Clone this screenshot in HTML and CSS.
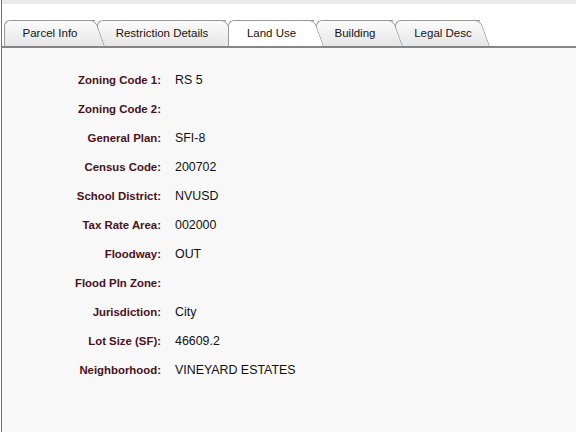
FILE: index.html
```html
<!DOCTYPE html>
<html>
<head>
<meta charset="utf-8">
<link rel="stylesheet" href="styles.css">
</head>
<body>
<div class="frame">
  <div class="topstrip"></div>
  <nav class="tabbar">
    <div class="tab t1">Parcel Info</div>
    <div class="tab t2">Restriction Details</div>
    <div class="tab t3 active">Land Use</div>
    <div class="tab t4">Building</div>
    <div class="tab t5">Legal Desc</div>
  </nav>
  <main class="panel">
    <div class="grid">
      <div class="label">Zoning Code 1:</div><div class="value">RS 5</div>
      <div class="label">Zoning Code 2:</div><div class="value"></div>
      <div class="label">General Plan:</div><div class="value">SFI-8</div>
      <div class="label">Census Code:</div><div class="value">200702</div>
      <div class="label">School District:</div><div class="value">NVUSD</div>
      <div class="label">Tax Rate Area:</div><div class="value">002000</div>
      <div class="label">Floodway:</div><div class="value">OUT</div>
      <div class="label">Flood Pln Zone:</div><div class="value"></div>
      <div class="label">Jurisdiction:</div><div class="value">City</div>
      <div class="label">Lot Size (SF):</div><div class="value">46609.2</div>
      <div class="label">Neighborhood:</div><div class="value">VINEYARD ESTATES</div>
    </div>
  </main>
</div>
</body>
</html>
```
FILE: styles.css
```css
html, body {
  margin: 0;
  padding: 0;
  height: 100%;
  background: #ffffff;
  font-family: "Liberation Sans", Arial, sans-serif;
}
body {
  padding-left: 1px;
  box-sizing: border-box;
  overflow: hidden;
}
.frame {
  height: 432px;
  border-left: 1px solid #727272;
  display: flex;
  flex-direction: column;
  background: #ffffff;
}
.topstrip {
  height: 4px;
  background: #ebebeb;
  flex: none;
}
.tabbar {
  display: flex;
  padding: 16px 0 0 2px;
  height: 26px;
  flex: none;
}
.tab {
  position: relative;
  box-sizing: border-box;
  height: 26px;
  margin-right: 2px;
  padding: 6px 0 0 0;
  text-align: center;
  font-size: 11.5px;
  color: #141414;
  border-top: 1px solid #9a9a9a;
  border-left: 1px solid #9a9a9a;
  border-top-left-radius: 6px;
  background: linear-gradient(#fbfbfb, #e6e6e6);
}
.tab::after {
  content: "";
  position: absolute;
  top: -1px;
  bottom: 0;
  right: -10px;
  width: 16px;
  border-top: 1px solid #9a9a9a;
  border-right: 1px solid #9a9a9a;
  border-top-right-radius: 6px;
  background: inherit;
  transform: skewX(20deg);
  transform-origin: bottom left;
  z-index: -1;
}
.tab.active {
  background: #ffffff;
}
.t1 { width: 91px; z-index: 5; }
.t2 { width: 129px; z-index: 4; }
.t3 { width: 86px; z-index: 10; }
.t4 { width: 77px; z-index: 2; }
.t5 { width: 85px; z-index: 1; padding-left: 10px; }
.panel {
  flex: 1;
  border-top: 2px solid #858585;
  background: #f8f8f8;
  position: relative;
  z-index: 20;
}
.grid {
  display: grid;
  grid-template-columns: 159px auto;
  grid-auto-rows: 29px;
  column-gap: 14px;
  padding-top: 17px;
  align-items: center;
}
.label {
  text-align: right;
  font-weight: bold;
  font-size: 11.4px;
  color: #4a111b;
}
.value {
  font-size: 12.4px;
  color: #111111;
}
```
